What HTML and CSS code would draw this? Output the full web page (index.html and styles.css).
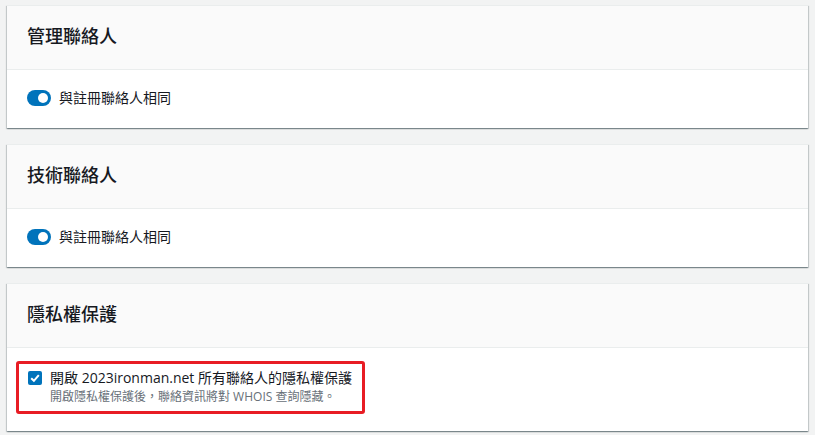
FILE: index.html
```html
<!DOCTYPE html>
<html>
	<head>
		<meta charset='utf-8' />
		<title>聯絡人設定</title>
		<link rel="stylesheet" href="styles.css">
	</head>
	<body>

		<div class="card">
			<div class="card-header">管理聯絡人</div>
			<div class="card-body">
				<label class="toggle-row">
					<span class="toggle"><span class="toggle-knob"></span></span>
					<span>與註冊聯絡人相同</span>
				</label>
			</div>
		</div>

		<div class="card">
			<div class="card-header">技術聯絡人</div>
			<div class="card-body">
				<label class="toggle-row">
					<span class="toggle"><span class="toggle-knob"></span></span>
					<span>與註冊聯絡人相同</span>
				</label>
			</div>
		</div>

		<div class="card">
			<div class="card-header">隱私權保護</div>
			<div class="card-body card-body-privacy">
				<div class="highlight">
					<span class="checkbox">
						<svg width="14" height="14" viewBox="0 0 14 14">
							<path d="M3.2 7.2 L5.9 9.8 L10.8 4.2" fill="none" stroke="#fff" stroke-width="2" />
						</svg>
					</span>
					<div class="check-text">
						<div class="check-label">開啟 2023ironman.net 所有聯絡人的隱私權保護</div>
						<div class="check-desc">開啟隱私權保護後，聯絡資訊將對 WHOIS 查詢隱藏。</div>
					</div>
				</div>
			</div>
		</div>

	</body>
</html>
```

FILE: styles.css
```css
body{
	margin:0;
	padding:5px 7px;
	background-color:#f2f3f3;
	font:normal 14px "Open Sans", "Noto Sans CJK TC", sans-serif;
	color:#16191f;
}
.card{
	background-color:#fff;
	border-top:1px solid #eaeded;
	box-shadow:0 1px 1px 0 rgba(0,28,36,.3), 1px 1px 1px 0 rgba(0,28,36,.15), -1px 1px 1px 0 rgba(0,28,36,.15);
	margin-bottom:16px;
}
.card-header{
	background-color:#fafafa;
	border-bottom:1px solid #eaeded;
	padding:19px 20px 22px;
	font-size:18px;
	font-weight:500;
	line-height:22px;
}
.card-body{
	padding:18px 20px 20px;
}
.toggle-row{
	display:flex;
	align-items:center;
	gap:8px;
	line-height:20px;
}
.toggle{
	display:flex;
	justify-content:flex-end;
	align-items:center;
	width:24px;
	height:16px;
	padding:0 3px;
	box-sizing:border-box;
	border-radius:8px;
	background-color:#0073bb;
}
.toggle-knob{
	width:10px;
	height:10px;
	border-radius:50%;
	background-color:#fff;
}
.card-body-privacy{
	padding:13px 20px 17px 9px;
}
.highlight{
	display:inline-flex;
	align-items:flex-start;
	gap:8px;
	border:3px solid #e81c24;
	border-radius:3px;
	padding:4px 10px 6px 9px;
}
.checkbox{
	display:flex;
	width:14px;
	height:14px;
	margin-top:3px;
	border-radius:2px;
	background-color:#0073bb;
}
.check-label{
	line-height:20px;
}
.check-desc{
	font-size:12px;
	line-height:17px;
	color:#687078;
}
```
